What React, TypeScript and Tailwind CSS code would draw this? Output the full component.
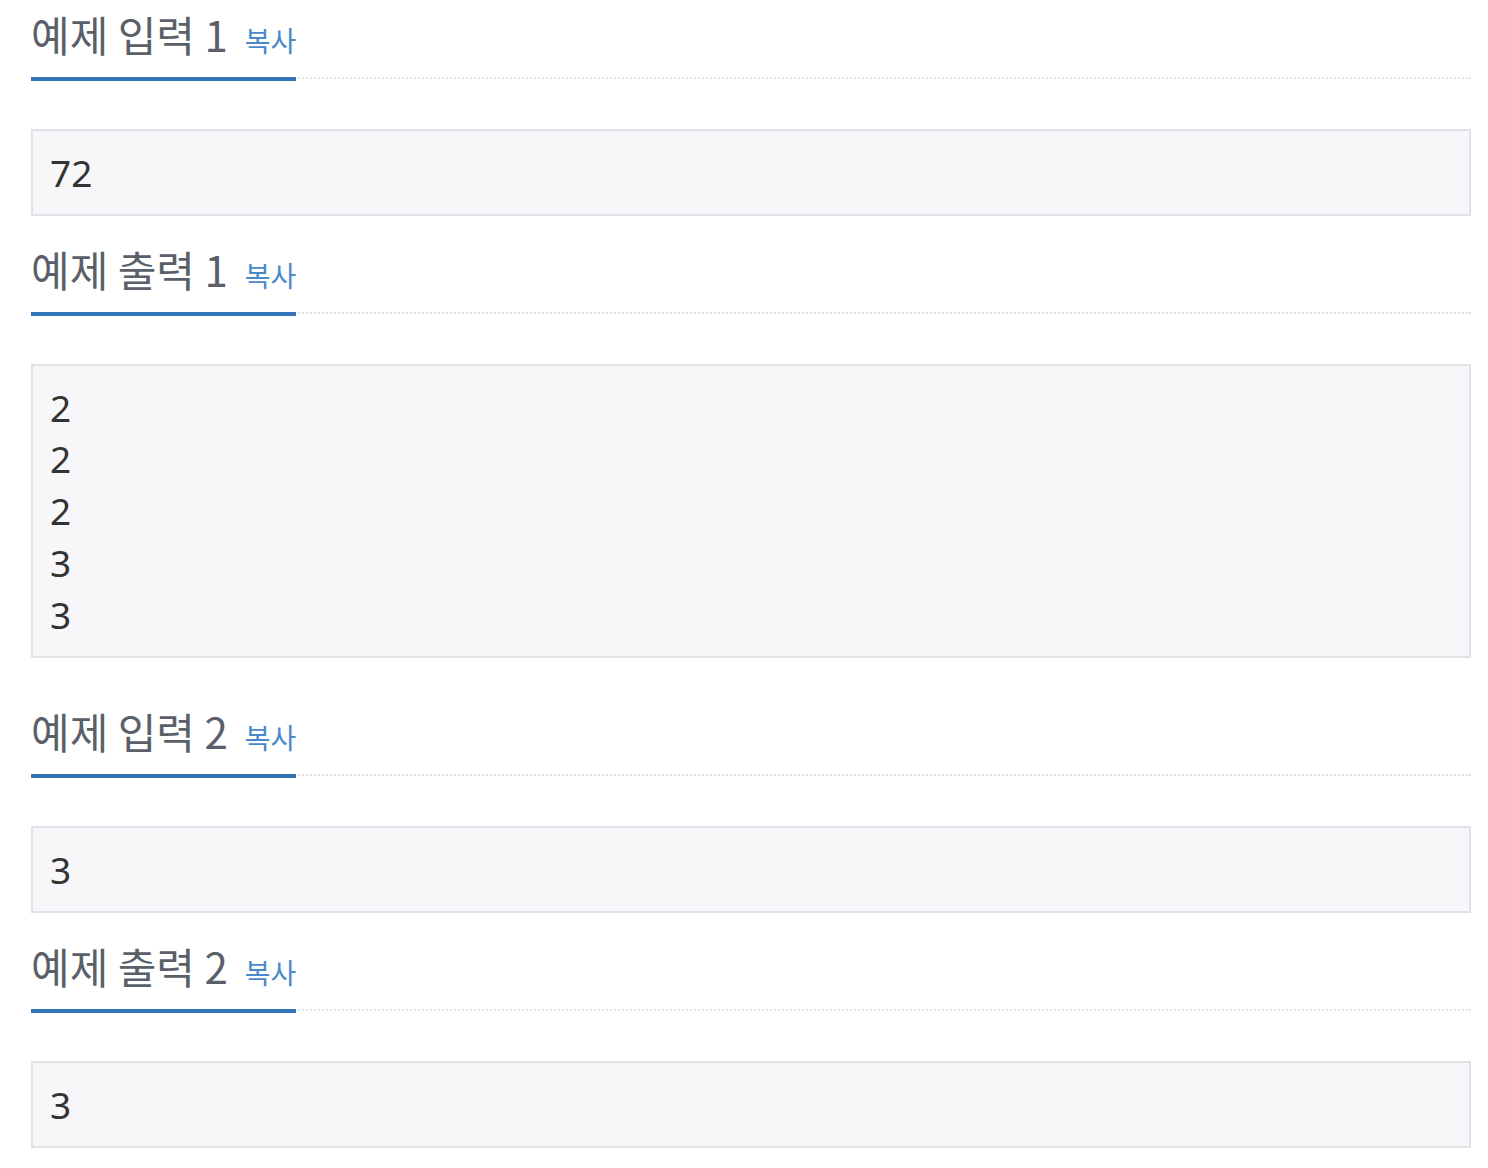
const samples = [
  { title: '예제 입력 1', data: '72', gap: '' },
  { title: '예제 출력 1', data: '2\n2\n2\n3\n3', gap: 'mt-[19px]' },
  { title: '예제 입력 2', data: '3', gap: 'mt-[39px]' },
  { title: '예제 출력 2', data: '3', gap: 'mt-[19px]' },
];

const Headline = ({ title }: { title: string }) => (
  <div className="flex border-b-2 border-dotted border-[#dfe2e8]">
    <h2 className="-mb-[4px] border-b-4 border-[#3173b5] pb-[10px] text-[42px] leading-[67px] text-[#596069] font-['Noto_Sans_CJK_KR',sans-serif] font-normal">
      {title}
      <span className="ml-[17px] text-[28px] leading-none text-[#4a89c8]">복사</span>
    </h2>
  </div>
);

const App = () => {
  return (
    <div className="min-h-screen bg-white">
      <div className="ml-[31px] w-[1440px]">
        {samples.map((s) => (
          <section key={s.title} className={s.gap}>
            <Headline title={s.title} />
            <pre className="mt-[50px] border-2 border-[#e1e1e8] bg-[#f7f7f9] px-[17px] py-[15.625px] text-[37px] leading-[51.75px] text-[#333333] font-['Noto_Sans',sans-serif]">
              {s.data}
            </pre>
          </section>
        ))}
      </div>
    </div>
  );
};

export default App;
